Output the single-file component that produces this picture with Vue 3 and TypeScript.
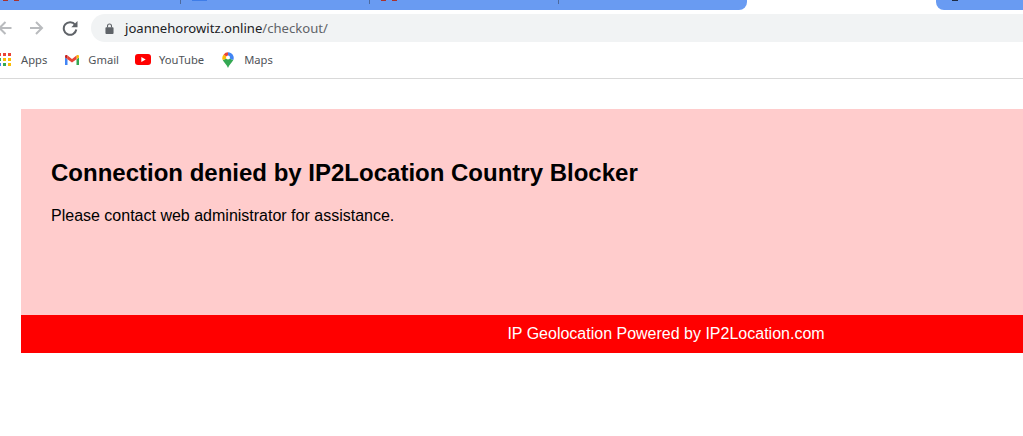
<template>
  <div class="window">
    <div class="tab-strip">
      <div class="tabs-left">
        <div v-for="tab in tabs" :key="tab.id" class="tab" :class="{ sep: tab.sep }">
          <span class="favicon" :class="tab.icon"></span>
        </div>
      </div>
      <div class="tab-active"></div>
      <div class="tab-right"><span class="favicon dark"></span></div>
    </div>

    <div class="toolbar">
      <div class="nav">
        <svg viewBox="0 0 16 16" width="16" height="16">
          <path d="M15.500 8H4M9.500 2 3.500 8l6 6" fill="none" stroke="#b9bbbe" stroke-width="2" />
        </svg>
        <svg viewBox="0 0 16 16" width="16" height="16">
          <path d="M1 8h12M7 2l6 6-6 6" fill="none" stroke="#b9bbbe" stroke-width="2" />
        </svg>
        <svg viewBox="0 0 16 16" width="16" height="16">
          <path d="M13.200 4.800A6.300 6.300 0 1 0 14.300 9.500" fill="none" stroke="#5f6368" stroke-width="2" />
          <path d="M15.500 1v6.200H9.300z" fill="#5f6368" />
        </svg>
      </div>
      <div class="omnibox">
        <svg viewBox="0 0 10 12" width="9" height="11">
          <path d="M1.500 4.500h7a1 1 0 0 1 1 1V11a1 1 0 0 1-1 1h-7a1 1 0 0 1-1-1V5.500a1 1 0 0 1 1-1z" fill="#5f6368" />
          <path d="M2.800 5V3.200a2.200 2.200 0 0 1 4.400 0V5" fill="none" stroke="#5f6368" stroke-width="1.200" />
        </svg>
        <span class="url">joannehorowitz.online<span class="url-path">/checkout/</span></span>
      </div>
    </div>

    <div class="bookmarks">
      <div class="bookmark apps">
        <span class="apps-grid">
          <i v-for="(c, i) in appDots" :key="i" :style="{ background: c }"></i>
        </span>
        <span>Apps</span>
      </div>
      <div class="bookmark gmail">
        <svg viewBox="0 0 14 10" width="14" height="10">
          <path d="M0 10h2.500V4.200L0 2.400z" fill="#4285f4" />
          <path d="M11.500 10H14V2.400l-2.500 1.800z" fill="#34a853" />
          <path d="M11.500.600v3.600L14 2.400V1.200C14 .1 12.500-.3 11.500.600z" fill="#fbbc04" />
          <path d="M2.500 4.200V.600L7 4l4.500-3.400v3.600L7 7.600z" fill="#ea4335" />
          <path d="M0 1.200v1.200l2.500 1.800V.600C1.500-.3 0 .1 0 1.200z" fill="#c5221f" />
        </svg>
        <span>Gmail</span>
      </div>
      <div class="bookmark youtube">
        <svg viewBox="0 0 16 11" width="16" height="11">
          <rect width="16" height="11" rx="3" fill="#ff0000" />
          <path d="M6.300 3v5l4.400-2.500z" fill="#fff" />
        </svg>
        <span>YouTube</span>
      </div>
      <div class="bookmark maps">
        <svg viewBox="0 0 12 16" width="12" height="16">
          <path d="M6 16C5 12.500 1.800 10.500.700 8L6 6l5.300 2C10.200 10.500 7 12.500 6 16z" fill="#34a853" />
          <path d="M.700 8A5.500 5.500 0 0 1 1.700 2.400L6 6z" fill="#fbbc04" />
          <path d="M1.700 2.400A5.600 5.600 0 0 1 6 .300V6z" fill="#ea4335" />
          <path d="M6 .300a5.600 5.600 0 0 1 5.300 7.700L6 6z" fill="#4285f4" />
          <circle cx="6" cy="5.600" r="2" fill="#fff" />
        </svg>
        <span>Maps</span>
      </div>
    </div>

    <div class="page">
      <div class="block">
        <div class="block-body">
          <h2>Connection denied by IP2Location Country Blocker</h2>
          <p>Please contact web administrator for assistance.</p>
        </div>
        <div class="block-footer">IP Geolocation Powered by IP2Location.com</div>
      </div>
    </div>
  </div>
</template>

<script setup lang="ts">
interface Tab {
  id: number
  icon: string
  sep: boolean
}

const tabs: Tab[] = [
  { id: 1, icon: 'red', sep: true },
  { id: 2, icon: 'blue', sep: true },
  { id: 3, icon: 'red', sep: true },
  { id: 4, icon: 'none', sep: false }
]

const appDots = [
  '#ea4335', '#ea4335', '#ea4335',
  '#34a853', '#fbbc04', '#fbbc04',
  '#4285f4', '#34a853', '#fbbc04'
]
</script>

<style>
html, body {
  margin: 0;
  background: #fff;
}
</style>

<style scoped>
.window {
  width: 1023px;
  height: 436px;
  overflow: hidden;
  background: #fff;
  font-family: "Liberation Sans", Arial, sans-serif;
}

.tab-strip {
  display: flex;
  height: 10px;
}

.tabs-left {
  display: flex;
  width: 747px;
  flex-shrink: 0;
  background: #699bf2;
  border-bottom-right-radius: 8px;
  overflow: hidden;
}

.tab {
  width: 189px;
  height: 4px;
  flex-shrink: 0;
  box-sizing: border-box;
  padding-left: 11px;
}

.tab:first-child {
  width: 181px;
  padding-left: 3px;
}

.tab.sep {
  border-right: 1px solid #4d6a9e;
}

.favicon {
  display: block;
  width: 16px;
  height: 1px;
}

.favicon.red {
  background: linear-gradient(90deg, #a8322e 0 5px, transparent 5px 11px, #a8322e 11px 16px);
}

.favicon.blue {
  width: 15px;
  background: #3f7de8;
}

.favicon.dark {
  width: 6px;
  margin-left: 16px;
  background: #1d2b45;
}

.tab-active {
  width: 189px;
  flex-shrink: 0;
}

.tab-right {
  flex: 1;
  background: #699bf2;
  border-bottom-left-radius: 8px;
}

.toolbar {
  display: flex;
  align-items: center;
  height: 36px;
}

.nav {
  display: flex;
  align-items: center;
  width: 95px;
  flex-shrink: 0;
  margin-left: -4px;
  gap: 17px;
}

.omnibox {
  flex: 1;
  display: flex;
  align-items: center;
  height: 28px;
  padding-left: 14px;
  background: #f1f3f4;
  border-radius: 14px 0 0 14px;
  gap: 11px;
}

.url {
  font-family: "Noto Sans", "Open Sans", sans-serif;
  font-size: 13.1px;
  color: #202124;
}

.url-path {
  color: #5f6368;
}

.bookmarks {
  display: flex;
  align-items: center;
  height: 27px;
  padding-bottom: 5px;
  border-bottom: 1px solid #d9d9d9;
}

.bookmark {
  display: flex;
  align-items: center;
  font-family: "Noto Sans", "Open Sans", sans-serif;
  font-size: 11.2px;
  color: #4f5358;
}

.apps {
  margin-left: -2px;
  gap: 10px;
}

.apps-grid {
  display: grid;
  grid-template-columns: repeat(3, 3px);
  grid-auto-rows: 3px;
  gap: 2px;
}

.gmail {
  margin-left: 18px;
  gap: 9px;
}

.youtube {
  margin-left: 16px;
  gap: 8px;
}

.maps {
  margin-left: 18px;
  gap: 10px;
}

.page {
  padding: 30px 0 0 21px;
}

.block {
  width: 1290px;
  color: #000;
}

.block-body {
  height: 206px;
  box-sizing: border-box;
  padding: 50px 30px 0;
  background: #ffcccc;
}

.block-body h2 {
  margin: 0 0 20px;
  font-size: 24px;
  line-height: 28px;
  font-weight: bold;
}

.block-body p {
  margin: 0;
  font-size: 16px;
  line-height: 18px;
}

.block-footer {
  height: 38px;
  line-height: 38px;
  text-align: center;
  font-size: 16px;
  color: #fff;
  background: #ff0000;
}
</style>
